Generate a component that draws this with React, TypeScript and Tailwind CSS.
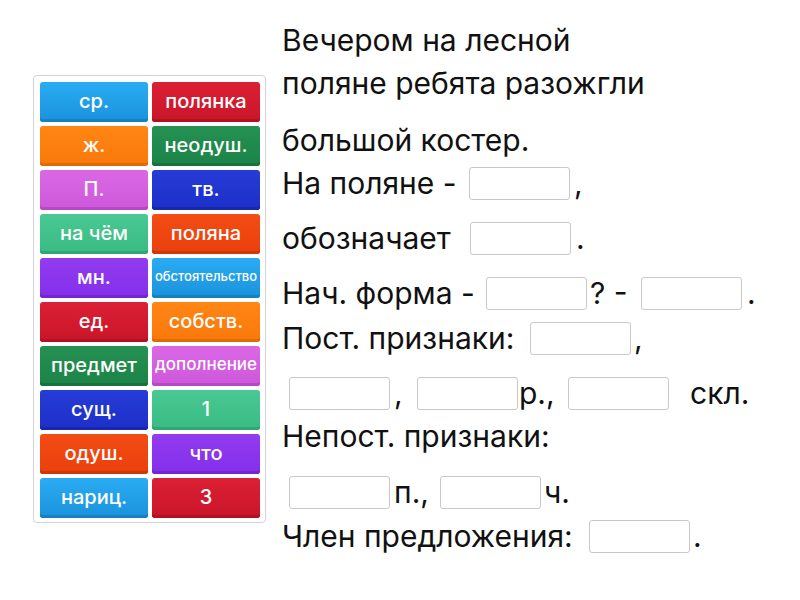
import React from 'react';

const colors: Record<string, string> = {
  sky: 'bg-gradient-to-b from-[#2aacf3] to-[#1a92dc] shadow-[inset_0_-3px_0_#1780c4]',
  red: 'bg-gradient-to-b from-[#dc1f35] to-[#c91529] shadow-[inset_0_-3px_0_#b01224]',
  orange: 'bg-gradient-to-b from-[#ff8614] to-[#f9780a] shadow-[inset_0_-3px_0_#e06a06]',
  green: 'bg-gradient-to-b from-[#249152] to-[#1c8347] shadow-[inset_0_-3px_0_#17723d]',
  pink: 'bg-gradient-to-b from-[#da68e5] to-[#cd58da] shadow-[inset_0_-3px_0_#b848c4]',
  blue: 'bg-gradient-to-b from-[#263cd6] to-[#1d2fc8] shadow-[inset_0_-3px_0_#1827ad]',
  teal: 'bg-gradient-to-b from-[#48c892] to-[#3bbb84] shadow-[inset_0_-3px_0_#31a673]',
  flame: 'bg-gradient-to-b from-[#f44c14] to-[#ea400c] shadow-[inset_0_-3px_0_#d0380a]',
  purple: 'bg-gradient-to-b from-[#913cf0] to-[#842eea] shadow-[inset_0_-3px_0_#7325d2]',
};

const tiles: { text: string; color: string; size?: string }[] = [
  { text: 'ср.', color: 'sky' },
  { text: 'полянка', color: 'red' },
  { text: 'ж.', color: 'orange' },
  { text: 'неодуш.', color: 'green' },
  { text: 'П.', color: 'pink' },
  { text: 'тв.', color: 'blue' },
  { text: 'на чём', color: 'teal' },
  { text: 'поляна', color: 'flame' },
  { text: 'мн.', color: 'purple' },
  { text: 'обстоятельство', color: 'sky', size: 'text-[13px]' },
  { text: 'ед.', color: 'red' },
  { text: 'собств.', color: 'orange' },
  { text: 'предмет', color: 'green' },
  { text: 'дополнение', color: 'pink', size: 'text-[17px]' },
  { text: 'сущ.', color: 'blue' },
  { text: '1', color: 'teal' },
  { text: 'одуш.', color: 'flame' },
  { text: 'что', color: 'purple' },
  { text: 'нариц.', color: 'sky' },
  { text: '3', color: 'red' },
];

// empty drop slot
function Box() {
  return <span className="inline-block w-[101px] h-[33px] bg-white border border-[#c9c9c9] rounded-[3px] shrink-0" />;
}

function Row({ mt, children }: { mt: string; children: React.ReactNode }) {
  return <div className={`flex items-center h-[34px] whitespace-pre ${mt}`}>{children}</div>;
}

export default function App() {
  return (
    <div className="w-[800px] h-[600px] bg-white flex" style={{ fontFamily: 'Inter, "Noto Sans", sans-serif' }}>
      {/* word bank */}
      <div className="ml-[33px] mt-[75px] w-[233px] h-[448px] border border-[#d3d3d3] rounded-[4px] p-[6px] pr-[5px] pb-[4px]">
        <div className="grid grid-cols-2 gap-[4px]">
          {tiles.map((t, i) => (
            <div
              key={i}
              className={`h-[40px] rounded-[3px] flex items-center justify-center text-white font-medium pb-[2px] ${t.size ?? 'text-[20px]'} ${colors[t.color]}`}
            >
              {t.text}
            </div>
          ))}
        </div>
      </div>

      {/* sentence with slots */}
      <div className="ml-[16px] pt-[23px] text-[30px] text-[#111] leading-none">
        <Row mt="mt-0">Вечером на лесной</Row>
        <Row mt="mt-[9px]">поляне ребята разожгли</Row>
        <Row mt="mt-[23px]">большой костер.</Row>
        <Row mt="mt-[9px]">
          <span className="w-[187px]">На поляне -</span>
          <Box />
          <span className="ml-[4px]">,</span>
        </Row>
        <Row mt="mt-[21px]">
          <span className="w-[188px]">обозначает</span>
          <Box />
          <span className="ml-[5px]">.</span>
        </Row>
        <Row mt="mt-[21px]">
          <span className="w-[204px]">Нач. форма -</span>
          <Box />
          <span className="w-[54px] pl-[3px]">? -</span>
          <Box />
          <span className="ml-[5px]">.</span>
        </Row>
        <Row mt="mt-[11px]">
          <span className="w-[248px]">Пост. признаки:</span>
          <Box />
          <span className="ml-[3px]">,</span>
        </Row>
        <Row mt="mt-[21px]">
          <span className="w-[7px]" />
          <Box />
          <span className="w-[27px] pl-[4px]">,</span>
          <Box />
          <span className="w-[50px] pl-[1px]">р.,</span>
          <Box />
          <span className="ml-[21px]">скл.</span>
        </Row>
        <Row mt="mt-[9px]">Непост. признаки:</Row>
        <Row mt="mt-[22px]">
          <span className="w-[7px]" />
          <Box />
          <span className="w-[50px] pl-[4px]">п.,</span>
          <Box />
          <span className="ml-[3px]">ч.</span>
        </Row>
        <Row mt="mt-[10px]">
          <span className="w-[307px]">Член предложения:</span>
          <Box />
          <span className="ml-[3px]">.</span>
        </Row>
      </div>
    </div>
  );
}
